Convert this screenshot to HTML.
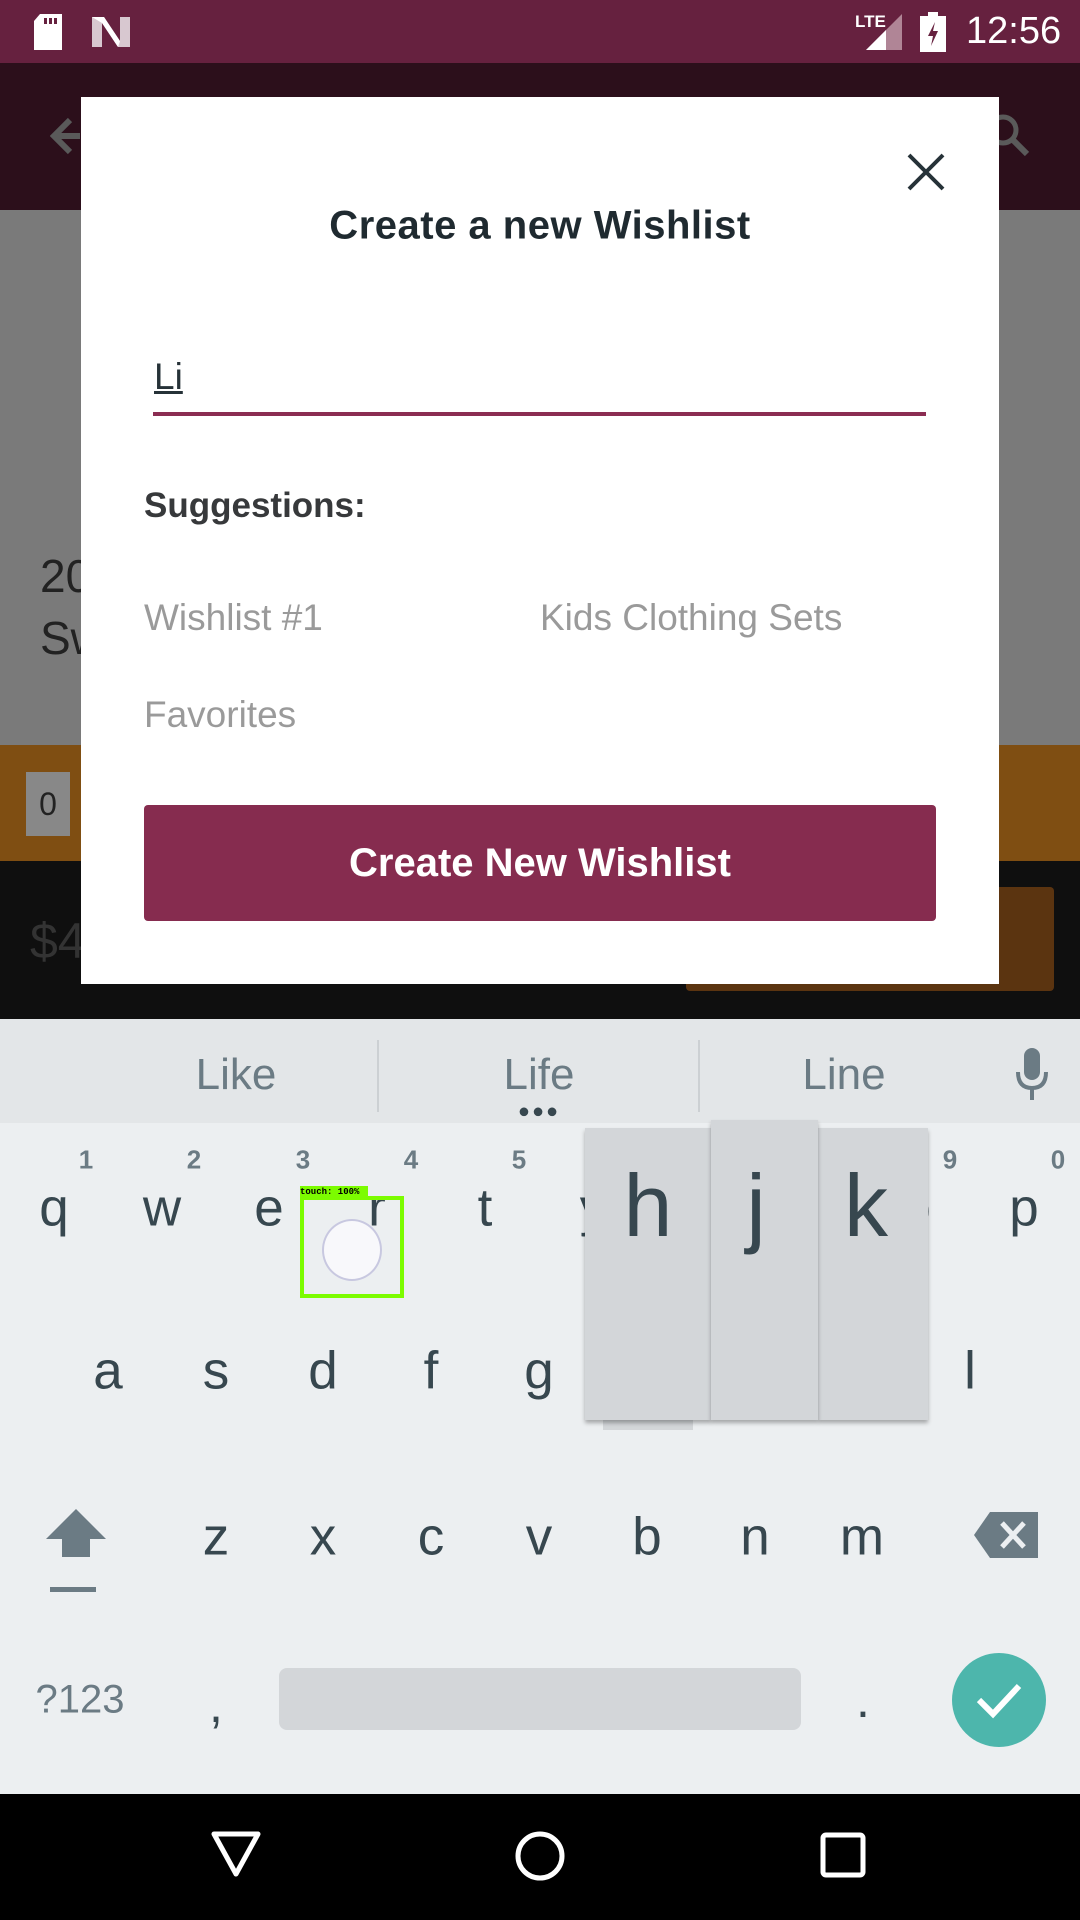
<!DOCTYPE html>
<html><head><meta charset="utf-8"><style>
*{margin:0;padding:0;box-sizing:border-box}
body{width:1080px;height:1920px;position:relative;overflow:hidden;font-family:"Liberation Sans",sans-serif;background:#777}
.a{position:absolute}
.t{position:absolute;white-space:nowrap;transform:translate(-50%,-50%)}
.k{position:absolute;font-size:53px;color:#37474f;transform:translate(-50%,-50%)}
.n{position:absolute;font-size:26px;font-weight:bold;color:#6b7b84;transform:translate(-50%,-50%)}
</style></head><body>
<div class="a" style="left:0;top:0;width:1080px;height:63px;background:#66213f"></div>
<svg class="a" style="left:32px;top:14px" width="32" height="38"><path d="M8 0H30V36H2V7Z" fill="#fff"/><rect x="12" y="4" width="3" height="6" fill="#66213f"/><rect x="17" y="4" width="3" height="6" fill="#66213f"/><rect x="22" y="4" width="3" height="6" fill="#66213f"/></svg>
<svg class="a" style="left:90px;top:15px" width="42" height="34"><path d="M2 2H14L30 26V2H40V32H28L12 8V32H2Z" fill="#d8c8d0"/><path d="M2 2H14L30 26 28 32 12 8Z" fill="#fff"/></svg>
<div class="a" style="left:855px;top:12px;font-size:17px;font-weight:bold;color:#fff">LTE</div>
<svg class="a" style="left:860px;top:14px" width="42" height="36"><path d="M42 0V36H6Z" fill="#b08596"/><path d="M26 16V36H6Z" fill="#fff"/></svg>
<svg class="a" style="left:920px;top:12px" width="26" height="40"><rect x="0" y="4" width="26" height="36" fill="#fff"/><rect x="8" y="0" width="10" height="5" fill="#fff"/><path d="M15 10 8 24H13L11 34 18 19H13Z" fill="#66213f"/></svg>
<div class="a" style="left:966px;top:10px;font-size:38px;color:#fff">12:56</div>
<div class="a" style="left:0;top:63px;width:1080px;height:147px;background:#2c0f1b"></div>
<svg class="a" style="left:50px;top:112px" width="40" height="48"><path d="M30 24H4M20 8 4 24 20 40" stroke="#5a5a5a" stroke-width="6" fill="none"/></svg>
<svg class="a" style="left:985px;top:108px" width="50" height="56"><circle cx="18" cy="22" r="13" stroke="#5a5a5a" stroke-width="5" fill="none"/><path d="M28 32 42 46" stroke="#5a5a5a" stroke-width="6"/></svg>
<div class="a" style="left:0;top:210px;width:1080px;height:535px;background:#7a7a7a"></div>
<div class="a" style="left:40px;top:545px;font-size:46px;color:#222;line-height:62px">20<br>Sw</div>
<div class="a" style="left:0;top:745px;width:1080px;height:116px;background:#7f4e12"></div>
<div class="a" style="left:26px;top:772px;width:44px;height:64px;background:#888;color:#222;font-size:32px;text-align:center;line-height:64px">0</div>
<div class="a" style="left:0;top:861px;width:1080px;height:158px;background:#0f0f0f"></div>
<div class="a" style="left:30px;top:912px;font-size:50px;color:#333">$4</div>
<div class="a" style="left:686px;top:887px;width:368px;height:104px;background:#5b3410;border-radius:4px"></div>
<div class="a" style="left:81px;top:97px;width:918px;height:887px;background:#fff"></div>
<svg class="a" style="left:906px;top:152px" width="40" height="40"><path d="M3 3 37 37M37 3 3 37" stroke="#263238" stroke-width="4"/></svg>
<div class="t" style="left:540px;top:226px;font-size:40px;font-weight:bold;color:#1f2a30;letter-spacing:0.5px">Create a new Wishlist</div>
<div class="a" style="left:154px;top:356px;font-size:37px;color:#263238;text-decoration:underline">Li</div>
<div class="a" style="left:153px;top:412px;width:773px;height:4px;background:#8b2d52"></div>
<div class="a" style="left:144px;top:486px;font-size:35px;font-weight:bold;color:#37393b">Suggestions:</div>
<div class="a" style="left:144px;top:597px;font-size:37px;color:#9a9a9a">Wishlist #1</div>
<div class="a" style="left:540px;top:597px;font-size:37px;color:#9a9a9a">Kids Clothing Sets</div>
<div class="a" style="left:144px;top:694px;font-size:37px;color:#9a9a9a">Favorites</div>
<div class="a" style="left:144px;top:805px;width:792px;height:116px;background:#862c4f;border-radius:4px;color:#fff;font-size:40px;font-weight:bold;text-align:center;line-height:116px">Create New Wishlist</div>
<div class="a" style="left:0;top:1019px;width:1080px;height:775px;background:#eceff1"></div>
<div class="a" style="left:0;top:1019px;width:1080px;height:104px;background:#e3e6e8"></div>
<div class="t" style="left:236px;top:1075px;font-size:44px;color:#6b7b84">Like</div>
<div class="t" style="left:539px;top:1075px;font-size:44px;color:#6b7b84">Life</div>
<div class="t" style="left:844px;top:1075px;font-size:44px;color:#6b7b84">Line</div>
<div class="a" style="left:377px;top:1040px;width:2px;height:72px;background:#ccd0d3"></div>
<div class="a" style="left:698px;top:1040px;width:2px;height:72px;background:#ccd0d3"></div>
<div class="t" style="left:539px;top:1112px;font-size:20px;color:#37474f;letter-spacing:2px">●●●</div>
<svg class="a" style="left:1014px;top:1048px" width="36" height="56"><rect x="10" y="0" width="16" height="32" rx="8" fill="#6b7b84"/><path d="M4 24Q4 40 18 40Q32 40 32 24M18 40V52" stroke="#6b7b84" stroke-width="4" fill="none"/></svg>
<div class="n" style="left:86px;top:1160px">1</div><div class="n" style="left:194px;top:1160px">2</div><div class="n" style="left:303px;top:1160px">3</div><div class="n" style="left:411px;top:1160px">4</div><div class="n" style="left:519px;top:1160px">5</div><div class="n" style="left:950px;top:1160px">9</div><div class="n" style="left:1058px;top:1160px">0</div>
<div class="k" style="left:54px;top:1208px">q</div><div class="k" style="left:162px;top:1208px">w</div><div class="k" style="left:269px;top:1208px">e</div><div class="k" style="left:377px;top:1208px">r</div><div class="k" style="left:485px;top:1208px">t</div><div class="k" style="left:593px;top:1208px">y</div><div class="k" style="left:916px;top:1208px">o</div><div class="k" style="left:1024px;top:1208px">p</div>
<div class="k" style="left:108px;top:1371px">a</div><div class="k" style="left:216px;top:1371px">s</div><div class="k" style="left:323px;top:1371px">d</div><div class="k" style="left:431px;top:1371px">f</div><div class="k" style="left:539px;top:1371px">g</div><div class="k" style="left:970px;top:1371px">l</div>
<div class="k" style="left:216px;top:1537px">z</div><div class="k" style="left:323px;top:1537px">x</div><div class="k" style="left:431px;top:1537px">c</div><div class="k" style="left:539px;top:1537px">v</div><div class="k" style="left:647px;top:1537px">b</div><div class="k" style="left:755px;top:1537px">n</div><div class="k" style="left:862px;top:1537px">m</div>
<div class="a" style="left:603px;top:1408px;width:90px;height:22px;background:#d3d6d9"></div>
<div class="a" style="left:818px;top:1128px;width:110px;height:292px;background:#d3d6d9;box-shadow:0 3px 4px rgba(0,0,0,.3)"></div>
<div class="a" style="left:585px;top:1128px;width:126px;height:292px;background:#d3d6d9;box-shadow:0 3px 4px rgba(0,0,0,.3)"></div>
<div class="a" style="left:711px;top:1120px;width:107px;height:300px;background:#d3d6d9;box-shadow:0 3px 4px rgba(0,0,0,.3)"></div>
<div class="t" style="left:648px;top:1206px;font-size:88px;color:#37474f">h</div>
<div class="t" style="left:756px;top:1206px;font-size:88px;color:#37474f">j</div>
<div class="t" style="left:866px;top:1206px;font-size:88px;color:#37474f">k</div>
<div class="a" style="left:300px;top:1196px;width:104px;height:102px;border:4px solid #7cfc00"></div>
<div class="a" style="left:300px;top:1186px;width:68px;height:12px;background:#7cfc00;font-size:9px;font-family:'Liberation Mono',monospace;font-weight:bold;line-height:12px">touch: 100%</div>
<div class="a" style="left:322px;top:1219px;width:60px;height:62px;border-radius:50%;background:#f8f8fb;border:2px solid #c8c8e0"></div>
<svg class="a" style="left:44px;top:1505px" width="64" height="90"><path d="M32 4 62 34H46V52H18V34H2Z" fill="#6b7b84"/><rect x="6" y="82" width="46" height="5" fill="#6b7b84"/></svg>
<svg class="a" style="left:974px;top:1512px" width="64" height="46"><path d="M16 0H64V46H16L0 23Z" fill="#6b7b84"/><path d="M28 11 50 35M50 11 28 35" stroke="#eceff1" stroke-width="5"/></svg>
<div class="t" style="left:80px;top:1700px;font-size:40px;color:#6b7b84">?123</div>
<div class="t" style="left:216px;top:1705px;font-size:50px;color:#37474f">,</div>
<div class="a" style="left:279px;top:1668px;width:522px;height:62px;background:#d3d6d9;border-radius:8px"></div>
<div class="t" style="left:863px;top:1700px;font-size:50px;color:#37474f">.</div>
<div class="a" style="left:952px;top:1653px;width:94px;height:94px;border-radius:50%;background:#4db6ac"></div>
<svg class="a" style="left:975px;top:1678px" width="48" height="44"><path d="M4 22 18 36 44 8" stroke="#fff" stroke-width="6" fill="none"/></svg>
<div class="a" style="left:0;top:1794px;width:1080px;height:126px;background:#000"></div>
<svg class="a" style="left:210px;top:1830px" width="52" height="50"><path d="M4 4H48L26 44Z" stroke="#fff" stroke-width="5" fill="none" stroke-linejoin="round"/></svg>
<svg class="a" style="left:514px;top:1830px" width="52" height="52"><circle cx="26" cy="26" r="22" stroke="#fff" stroke-width="5" fill="none"/></svg>
<svg class="a" style="left:820px;top:1832px" width="48" height="48"><rect x="3" y="3" width="40" height="40" rx="3" stroke="#fff" stroke-width="5" fill="none"/></svg>
</body></html>
